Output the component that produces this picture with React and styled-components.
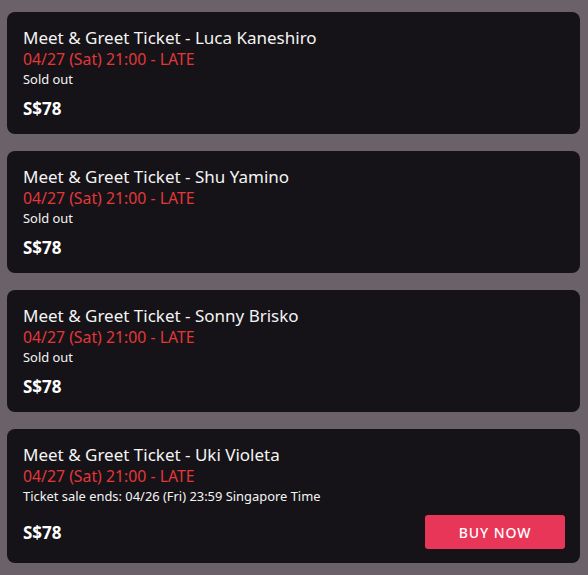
import React from "react";
import styled, { createGlobalStyle } from "styled-components";

const GlobalStyle = createGlobalStyle`
  body {
    margin: 0;
    background-color: #6b6169;
    font-family: "Noto Sans", "Open Sans", sans-serif;
  }
`;

// 전체 리스트
const List = styled.div`
  display: flex;
  flex-direction: column;
  gap: 17px;
  padding: 12px 8px 11px 7px;
`;

// 티켓 카드
const Card = styled.div`
  background-color: #151317;
  border-radius: 8px;
  padding: 14px 15px 14px 16px;
  display: flex;
  flex-direction: column;
`;

const Title = styled.div`
  color: #f4f4f4;
  font-size: 17px;
  line-height: 23px;
`;

const DateText = styled.div`
  color: #e2383a;
  font-size: 15.8px;
  line-height: 20px;
`;

const Note = styled.div`
  color: #f4f4f4;
  font-size: 12.9px;
  line-height: 20px;
`;

const PriceRow = styled.div`
  display: flex;
  justify-content: space-between;
  align-items: center;
  margin-top: ${(props) => (props.hasButton ? "9px" : "8px")};
  min-height: 22px;
`;

const Price = styled.div`
  color: #ffffff;
  font-size: 17px;
  font-weight: 700;
`;

const BuyButton = styled.button`
  background-color: #e83658;
  border: 0;
  border-radius: 3px;
  color: #ffffff;
  width: 140px;
  height: 34px;
  font-family: inherit;
  font-size: 14px;
  font-weight: 500;
  letter-spacing: 0.9px;
  cursor: pointer;
`;

const tickets = [
  { name: "Luca Kaneshiro", note: "Sold out" },
  { name: "Shu Yamino", note: "Sold out" },
  { name: "Sonny Brisko", note: "Sold out" },
  {
    name: "Uki Violeta",
    note: "Ticket sale ends: 04/26 (Fri) 23:59 Singapore Time",
    buy: true,
  },
];

function App() {
  return (
    <>
      <GlobalStyle />
      <List>
        {tickets.map((t, idx) => (
          <Card key={idx}>
            <Title>Meet &amp; Greet Ticket - {t.name}</Title>
            <DateText>04/27 (Sat) 21:00 - LATE</DateText>
            <Note>{t.note}</Note>
            <PriceRow hasButton={t.buy}>
              <Price>S$78</Price>
              {t.buy && <BuyButton>BUY NOW</BuyButton>}
            </PriceRow>
          </Card>
        ))}
      </List>
    </>
  );
}

export default App;
